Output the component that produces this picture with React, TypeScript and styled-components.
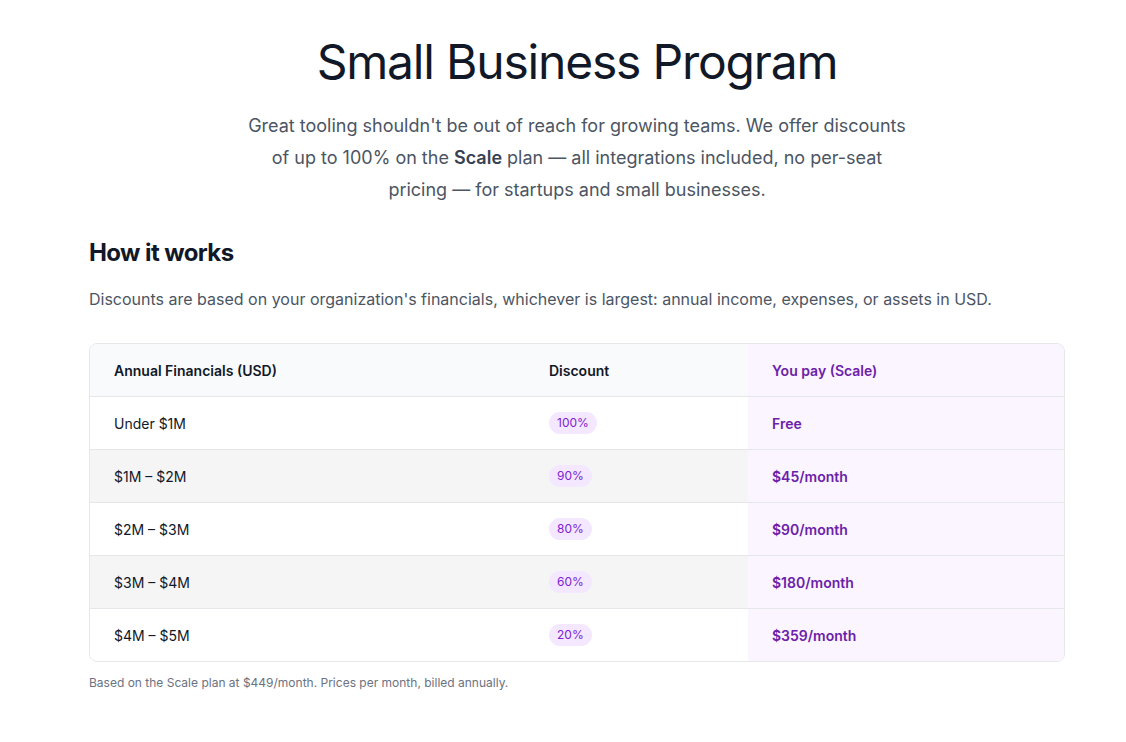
import { FC } from 'react'
import styled, { createGlobalStyle } from 'styled-components'

const GlobalStyle = createGlobalStyle`
   body {
      margin: 0;
      background: #ffffff;
      font-family: Inter, 'Noto Sans', sans-serif;
      color: #111827;
      -webkit-font-smoothing: antialiased;
   }
`

interface Tier {
   range: string
   discount: number
   price: string
}

const tiers: Tier[] = [
   { range: 'Under $1M', discount: 100, price: 'Free' },
   { range: '$1M – $2M', discount: 90, price: '$45/month' },
   { range: '$2M – $3M', discount: 80, price: '$90/month' },
   { range: '$3M – $4M', discount: 60, price: '$180/month' },
   { range: '$4M – $5M', discount: 20, price: '$359/month' },
]

const App: FC = () => {
   return (
      <>
         <GlobalStyle />
         <Page>
            <Hero>
               <Title>Small Business Program</Title>
               <Lead>
                  Great tooling shouldn't be out of reach for growing teams. We offer discounts of up to 100% on the{' '}
                  <strong>Scale</strong> plan — all integrations included, no per-seat pricing — for startups and small
                  businesses.
               </Lead>
            </Hero>
            <Section>
               <SectionTitle>How it works</SectionTitle>
               <SectionText>
                  Discounts are based on your organization's financials, whichever is largest: annual income, expenses, or
                  assets in USD.
               </SectionText>
               <TableFrame>
                  <Table>
                     <thead>
                        <tr>
                           <HeadCell>Annual Financials (USD)</HeadCell>
                           <HeadCell>Discount</HeadCell>
                           <HeadCell $highlight>You pay (Scale)</HeadCell>
                        </tr>
                     </thead>
                     <tbody>
                        {tiers.map((t, i) => (
                           <Row key={t.range} $striped={i % 2 === 1}>
                              <Cell>{t.range}</Cell>
                              <Cell>
                                 <Pill>{t.discount}%</Pill>
                              </Cell>
                              <PriceCell>{t.price}</PriceCell>
                           </Row>
                        ))}
                     </tbody>
                  </Table>
               </TableFrame>
               <Footnote>Based on the Scale plan at $449/month. Prices per month, billed annually.</Footnote>
            </Section>
         </Page>
      </>
   )
}

const Page = styled.main`
   width: 976px;
   padding: 28px 61px 40px 89px;
`

const Hero = styled.header`
   display: flex;
   flex-direction: column;
   align-items: center;
   text-align: center;
`

const Title = styled.h1`
   margin: 0;
   font-size: 48px;
   line-height: 68px;
   font-weight: 400;
   letter-spacing: -0.025em;
   color: #111827;
`

const Lead = styled.p`
   margin: 14px 0 0;
   max-width: 672px;
   font-size: 18px;
   line-height: 32px;
   color: #4b5563;

   strong {
      font-weight: 600;
      color: #374151;
   }
`

const Section = styled.section`
   margin-top: 31px;
`

const SectionTitle = styled.h2`
   margin: 0;
   font-size: 24px;
   line-height: 32px;
   font-weight: 700;
   letter-spacing: -0.025em;
   color: #111827;
`

const SectionText = styled.p`
   margin: 18px 0 0;
   font-size: 16px;
   line-height: 24px;
   color: #4b5563;
`

const TableFrame = styled.div`
   margin-top: 32px;
   border: 1px solid #e5e7eb;
   border-radius: 8px;
   overflow: hidden;
`

const Table = styled.table`
   width: 100%;
   border-collapse: collapse;
   table-layout: fixed;
   font-size: 14px;
`

const HeadCell = styled.th<{ $highlight?: boolean }>`
   height: 52px;
   padding: 0 24px;
   text-align: left;
   font-weight: 600;
   color: ${p => (p.$highlight ? '#6b21a8' : '#111827')};
   background: ${p => (p.$highlight ? '#faf5ff' : '#f9fafb')};
   border-bottom: 1px solid #e5e7eb;

   &:nth-child(1) {
      width: 387px;
   }
   &:nth-child(2) {
      width: 175px;
   }
`

const Row = styled.tr<{ $striped: boolean }>`
   background: ${p => (p.$striped ? '#f5f5f5' : '#ffffff')};

   &:not(:last-child) > td {
      border-bottom: 1px solid #e5e7eb;
   }
`

const Cell = styled.td`
   height: 52px;
   padding: 0 24px;
   color: #111827;
   vertical-align: middle;
`

const PriceCell = styled(Cell)`
   background: #faf5ff;
   font-weight: 600;
   color: #6b21a8;
`

const Pill = styled.span`
   display: inline-block;
   vertical-align: middle;
   padding: 3px 8px;
   border-radius: 999px;
   background: #f3e8ff;
   color: #7e22ce;
   font-size: 12px;
   line-height: 16px;
`

const Footnote = styled.p`
   margin: 13px 0 0;
   font-size: 12px;
   line-height: 16px;
   color: #6b7280;
`

export default App
